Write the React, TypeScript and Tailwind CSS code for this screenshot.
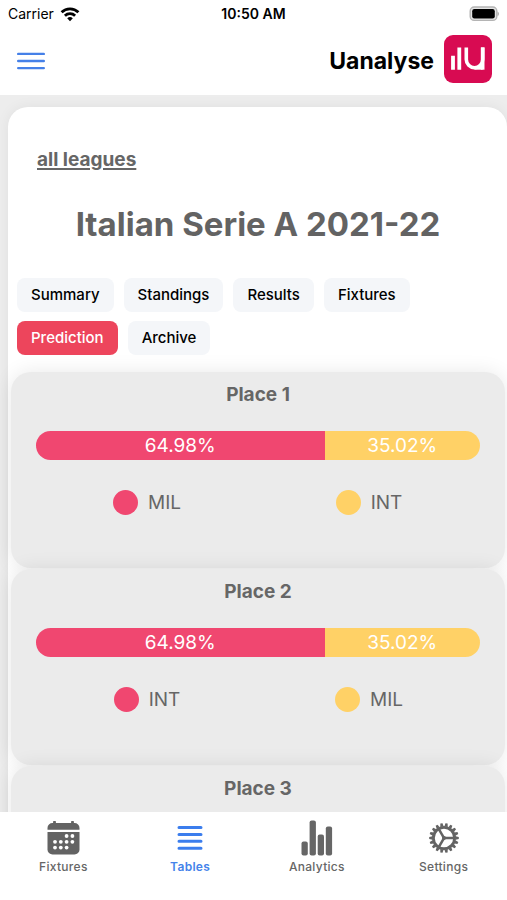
import type { ReactNode } from "react";

const tabs = ["Summary", "Standings", "Results", "Fixtures", "Prediction", "Archive"];

const places = [
  { title: "Place 1", first: "MIL", second: "INT" },
  { title: "Place 2", first: "INT", second: "MIL" },
  { title: "Place 3", first: "JUV", second: "NAP" },
];

function StatusBar() {
  return (
    <div className="grid h-7 grid-cols-3 items-center px-2 text-sm leading-4 text-black">
      <div className="flex items-center gap-1.5">
        <span>Carrier</span>
        <svg width="20" height="16" viewBox="0 0 20 16" fill="none" stroke="#000" strokeWidth="2.8" aria-hidden="true">
          <path d="M1.6 6.3a12 12 0 0 1 16.8 0" />
          <path d="M4.9 9.8a7.3 7.3 0 0 1 10.2 0" />
          <path d="M10 15.2l-2.8-2.9a4 4 0 0 1 5.6 0z" fill="#000" stroke="none" />
        </svg>
      </div>
      <span className="text-center font-semibold whitespace-nowrap">10:50 AM</span>
      <svg className="justify-self-end" width="30" height="16" viewBox="0 0 30 16" aria-hidden="true">
        <rect x="1.2" y="1" width="26.6" height="13.4" rx="4" fill="#e4e4e4" stroke="#b4b4b4" strokeWidth="1.4" />
        <rect x="3.2" y="3" width="22.6" height="9.4" rx="2.2" fill="#000" />
        <path d="M28.6 5.4c1.6.7 1.6 4 0 4.7z" fill="#a0a0a0" />
      </svg>
    </div>
  );
}

function Header() {
  return (
    <header className="flex items-center justify-between pt-[7px] pr-[15px] pb-3 pl-[17px]">
      <button type="button" aria-label="Open menu" className="flex h-12 items-center pt-1">
        <svg width="28" height="18" viewBox="0 0 28 18" stroke="#4580e8" strokeWidth="2.4" strokeLinecap="round">
          <path d="M1.2 1.9h25.6M1.2 9h25.6M1.2 16.1h25.6" />
        </svg>
      </button>
      <div className="flex items-center gap-2.5">
        <span className="pt-1 text-[23px] leading-8 font-bold text-black">Uanalyse</span>
        <svg width="48" height="48" viewBox="0 0 48 48" aria-hidden="true">
          <rect width="48" height="48" rx="9" fill="#d80b52" />
          <g fill="none" stroke="#fff">
            <path d="M9 20.7V34.7M15.3 12.4V34.7" strokeWidth="3.8" />
            <path d="M22.3 12.4V24.5a8.2 8.2 0 0 0 16.4 0V12.4" strokeWidth="3.6" />
            <path d="M38.7 12.4V34.7" strokeWidth="3.6" />
            <path d="M30.5 33.2h8.2" strokeWidth="3" />
          </g>
        </svg>
      </div>
    </header>
  );
}

function LegendItem({ dot, label }: { dot: string; label: string }) {
  return (
    <li className="flex items-center justify-center gap-2.5">
      <span className={`size-[25px] rounded-full ${dot}`} />
      <span>{label}</span>
    </li>
  );
}

function PlaceCard({ title, first, second }: { title: string; first: string; second: string }) {
  return (
    <section className="rounded-[20px] bg-[#ebebeb] px-[25px] pt-2.5 pb-[53px] text-[19px] leading-[25px] text-[#666] shadow-[0_0_20px_rgba(0,0,0,0.09)]">
      <h2 className="text-center font-bold">{title}</h2>
      <div className="mt-6 flex h-[29px] overflow-hidden rounded-full text-center leading-[29px] text-white">
        <div className="bg-[#f04770]" style={{ width: "64.98%" }}>64.98%</div>
        <div className="bg-[#ffd166]" style={{ width: "35.02%" }}>35.02%</div>
      </div>
      <ul className="mt-[30px] grid grid-cols-2">
        <LegendItem dot="bg-[#f04770]" label={first} />
        <LegendItem dot="bg-[#ffd166]" label={second} />
      </ul>
    </section>
  );
}

function CalendarIcon() {
  const dots = [
    [19.6, 15], [25.4, 15],
    [8, 20.8], [13.8, 20.8], [19.6, 20.8], [25.4, 20.8],
    [8, 26.6], [13.8, 26.6], [19.6, 26.6],
  ];
  return (
    <svg width="33" height="34" viewBox="0 0 33 34" aria-hidden="true">
      <g fill="#636363">
        <path d="M0.5 8.8V7a5 5 0 0 1 5-5h.6V1a1.4 1.4 0 0 1 2.8 0v1h15.2V1a1.4 1.4 0 0 1 2.8 0v1h.6a5 5 0 0 1 5 5v1.8z" />
        <path d="M0.5 10.9h32V28.5a5 5 0 0 1-5 5h-22a5 5 0 0 1-5-5z" />
      </g>
      {dots.map(([x, y]) => (
        <circle key={`${x}-${y}`} cx={x} cy={y} r="1.9" fill="#fff" />
      ))}
    </svg>
  );
}

function TablesIcon() {
  return (
    <svg width="26" height="26" viewBox="0 0 26 26" stroke="#3b7ded" strokeWidth="3" strokeLinecap="round" aria-hidden="true">
      <path d="M2 2.5h22M2 9.4h22M2 16.3h22M2 23.2h22" />
    </svg>
  );
}

function AnalyticsIcon() {
  return (
    <svg width="32" height="36" viewBox="0 0 32 36" fill="#666" aria-hidden="true">
      <rect x="0.5" y="21.5" width="6.3" height="14" rx="2" />
      <rect x="8.6" y="0.5" width="6.3" height="35" rx="2" />
      <rect x="16.7" y="14.5" width="6.3" height="21" rx="2" />
      <rect x="24.8" y="6.5" width="6.3" height="29" rx="2" />
    </svg>
  );
}

function GearIcon() {
  const teeth = Array.from({ length: 18 }, (_, i) => i * 20);
  return (
    <svg width="30" height="30" viewBox="-15 -15 30 30" fill="none" stroke="#636363" aria-hidden="true">
      <circle r="10.6" strokeWidth="2.8" />
      {teeth.map((a) => (
        <path key={a} d="M-1.7-11.5-1.1-14.8H1.1L1.7-11.5z" fill="#636363" stroke="none" transform={`rotate(${a + 10})`} />
      ))}
      {[90, 210, 330].map((a) => (
        <path key={a} d="M0 0V-10.5" strokeWidth="2.5" transform={`rotate(${a})`} />
      ))}
      <circle r="2" fill="#636363" stroke="none" />
    </svg>
  );
}

function NavItem({ label, active, children }: { label: string; active?: boolean; children: ReactNode }) {
  return (
    <a
      href={`#${label.toLowerCase()}`}
      aria-current={active ? "page" : undefined}
      className={`flex flex-1 flex-col items-center text-xs leading-4 tracking-wide ${
        active ? "font-semibold text-[#4583ea]" : "font-medium text-[#666]"
      }`}
    >
      <span className="flex h-[38px] items-center">{children}</span>
      <span className="mt-0.5">{label}</span>
    </a>
  );
}

export default function App() {
  return (
    <div className="flex h-screen flex-col overflow-hidden bg-white font-['Inter','Liberation_Sans',sans-serif]">
      <StatusBar />
      <Header />
      <main className="min-h-0 flex-1 overflow-x-hidden overflow-y-auto bg-[#ededed] pt-3 pl-2 [scrollbar-width:none]">
        <div className="rounded-[20px] bg-white pt-[41px] pr-0.5 pl-[3px] shadow-[0_0_14px_rgba(0,0,0,0.06)]">
          <a href="#leagues" className="ml-[26px] block w-fit text-[19px] leading-6 font-bold text-[#666] underline decoration-2 underline-offset-2">
            all leagues
          </a>
          <h1 className="mt-8 text-center text-[33px] leading-10 font-bold text-[#636363]">
            Italian Serie A 2021-22
          </h1>
          <nav aria-label="League sections" className="mt-[34px] mb-[17px] flex flex-wrap gap-x-2.5 gap-y-[9px] pr-16 pl-1.5">
            {tabs.map((tab) => (
              <button
                key={tab}
                type="button"
                className={`h-[34px] rounded-lg px-[14px] text-[15px] font-medium ${
                  tab === "Prediction" ? "bg-[#ed455c] text-white" : "bg-[#f4f6f9] text-black"
                }`}
              >
                {tab}
              </button>
            ))}
          </nav>
          <div className="flex flex-col gap-px">
            {places.map((place) => (
              <PlaceCard key={place.title} {...place} />
            ))}
          </div>
        </div>
      </main>
      <nav aria-label="Main" className="flex h-[88px] shrink-0 bg-white pt-[7px]">
        <NavItem label="Fixtures">
          <CalendarIcon />
        </NavItem>
        <NavItem label="Tables" active>
          <TablesIcon />
        </NavItem>
        <NavItem label="Analytics">
          <AnalyticsIcon />
        </NavItem>
        <NavItem label="Settings">
          <GearIcon />
        </NavItem>
      </nav>
    </div>
  );
}
